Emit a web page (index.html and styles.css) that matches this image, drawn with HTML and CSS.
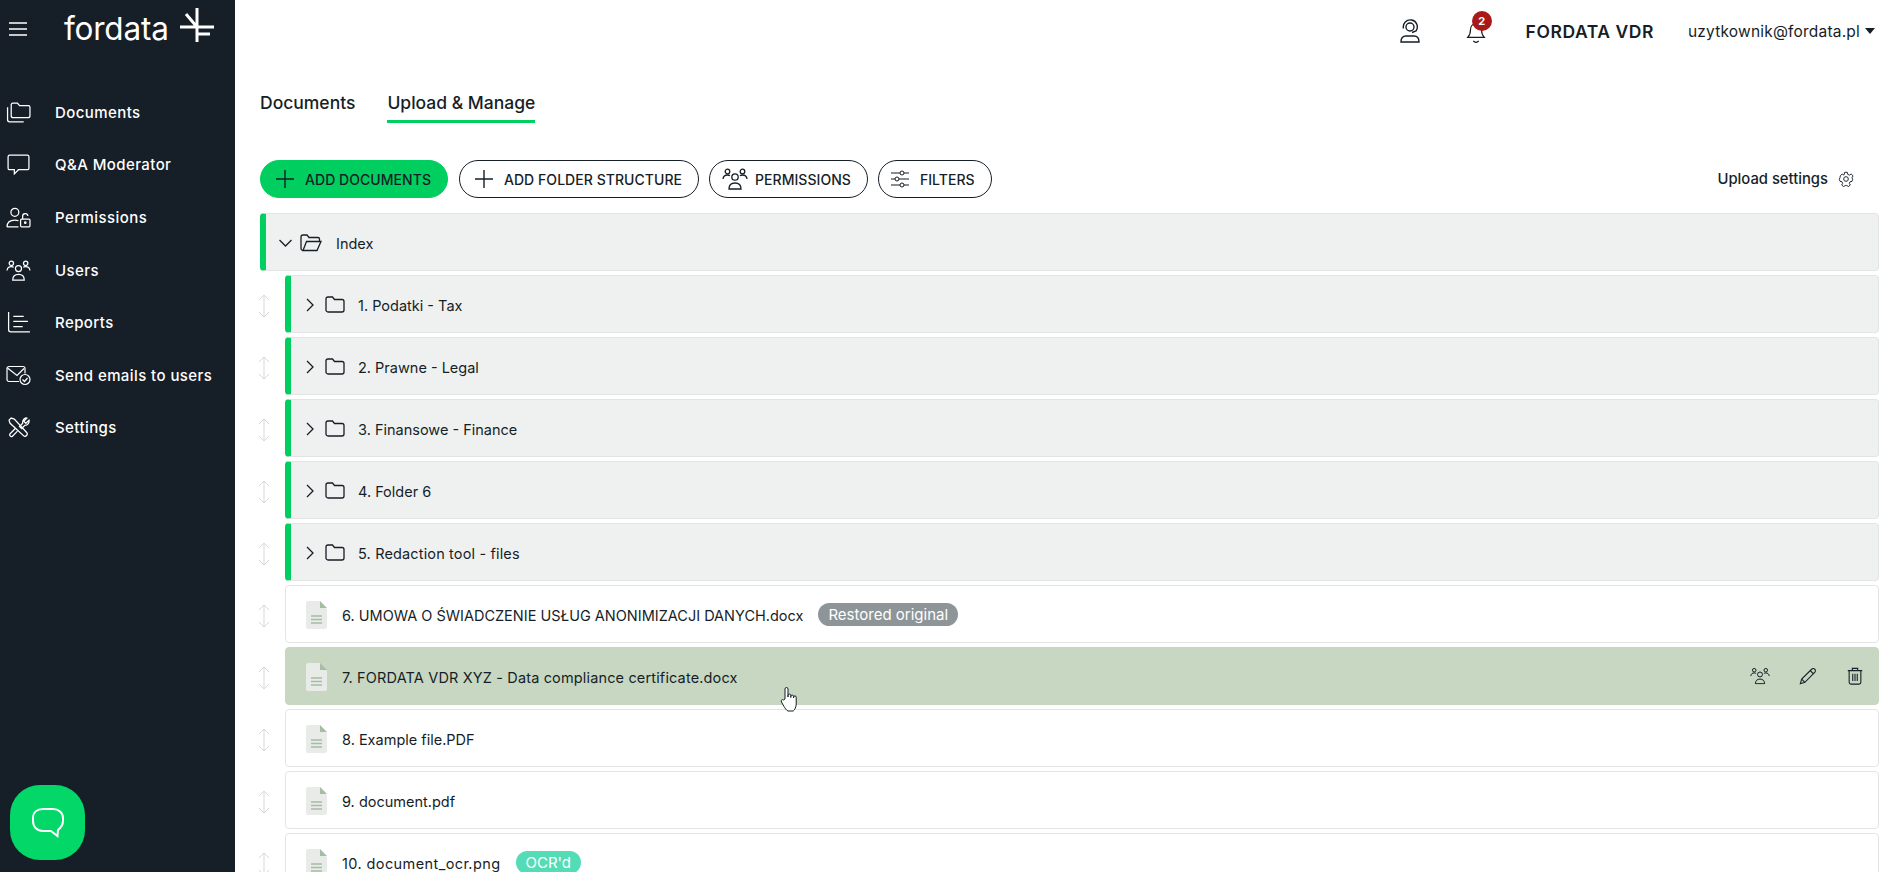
FILE: index.html
```html
<!DOCTYPE html>
<html lang="en">
<head>
<meta charset="utf-8">
<title>Fordata VDR</title>
<link rel="stylesheet" href="styles.css">
</head>
<body>
<svg class="sprite" xmlns="http://www.w3.org/2000/svg">
  <symbol id="i-users" viewBox="0 0 26 22"><g fill="none" stroke="currentColor" stroke-width="1.3"><circle cx="13" cy="9" r="3.2"/><path d="M7 21c0-4 2.500-6 6-6s6 2 6 6z"/><circle cx="5.500" cy="3.500" r="2.300"/><circle cx="20.500" cy="3.500" r="2.300"/><path d="M1 11c.3-2.500 2-4 4.500-4 1 0 1.800.2 2.500.7M25 11c-.3-2.500-2-4-4.500-4-1 0-1.800.2-2.500.7"/></g></symbol>
  <symbol id="i-plus" viewBox="0 0 18 18"><path d="M9 0v18M0 9h18" stroke="currentColor" stroke-width="1.400" fill="none"/></symbol>
  <symbol id="i-folder" viewBox="0 0 20 17"><path d="M1 3a2 2 0 0 1 2-2h4.500l2 2.500H17a2 2 0 0 1 2 2V14a2 2 0 0 1-2 2H3a2 2 0 0 1-2-2z" fill="none" stroke="currentColor" stroke-width="1.300"/></symbol>
  <symbol id="i-chev" viewBox="0 0 10 14"><path d="M2 1l6 6-6 6" fill="none" stroke="currentColor" stroke-width="1.300"/></symbol>
  <symbol id="i-drag" viewBox="0 0 12 24"><path d="M6 1v22M1 6l5-5 5 5M1 18l5 5 5-5" fill="none" stroke="#d5d9d9" stroke-width="1"/></symbol>
  <symbol id="i-file" viewBox="0 0 21 28"><path d="M2 0h11.500L21 8v18a2 2 0 0 1-2 2H2a2 2 0 0 1-2-2V2a2 2 0 0 1 2-2z" fill="#e8ebe8"/><path d="M14 0l7 7h-7z" fill="#a5bca5"/><path d="M5 15h11M5 18.500h11M5 22h11" stroke="#a5bca5" stroke-width="1.500"/></symbol>
</svg>

<div class="app">
  <aside class="sidebar">
    <div class="brand">
      <svg class="burger" viewBox="0 0 18 14"><path d="M0 1h18M0 7h18M0 13h18" stroke="#fff" stroke-width="1.500"/></svg>
      <span class="logo-text">fordata</span>
      <svg class="logo-mark" viewBox="0 0 34 34"><path d="M17 0v34M0 19h34M17 26h13M6 6l11 13" stroke="#fff" stroke-width="3" fill="none"/></svg>
    </div>
    <nav class="nav">
      <a class="nav-item"><svg class="nav-icon" viewBox="0 0 24 20"><path d="M5 3h0a0 0 0 0 0 0 0v10a2 2 0 0 0 2 2h14a2 2 0 0 0 2-2V5a1.500 1.500 0 0 0-1.500-1.500H13L11 1H6.500A1.500 1.500 0 0 0 5 2.500z M1.500 5v12a2 2 0 0 0 2 2H17" fill="none" stroke="#fff" stroke-width="1.200"/></svg>Documents</a>
      <a class="nav-item"><svg class="nav-icon" viewBox="0 0 24 20"><path d="M3.500 1h17A1.500 1.500 0 0 1 22 2.500v11a1.500 1.500 0 0 1-1.500 1.500H12l-4 4v-4H3.500A1.500 1.500 0 0 1 2 13.500v-11A1.500 1.500 0 0 1 3.500 1z" fill="none" stroke="#fff" stroke-width="1.200"/></svg>Q&amp;A Moderator</a>
      <a class="nav-item"><svg class="nav-icon" viewBox="0 0 24 20"><g fill="none" stroke="#fff" stroke-width="1.200"><circle cx="8.500" cy="5" r="3.800"/><path d="M1 19c0-4 2.500-6.500 7.500-6.500 1.500 0 2.500.2 3.500.6M1 19h11"/><rect x="14" y="11.500" width="9" height="7.500" rx="1"/><path d="M16 11.500V9a2.500 2.500 0 0 1 5-.5"/><circle cx="18.500" cy="15" r=".7"/></g></svg>Permissions</a>
      <a class="nav-item"><svg class="nav-icon" viewBox="0 0 26 22"><use href="#i-users"/></svg>Users</a>
      <a class="nav-item"><svg class="nav-icon" viewBox="0 0 24 20"><path d="M2.500 0v17a2 2 0 0 0 2 2H23M7 4h10M7 9h14M7 14h9" fill="none" stroke="#fff" stroke-width="1.200"/></svg>Reports</a>
      <a class="nav-item"><svg class="nav-icon" viewBox="0 0 25 20"><g fill="none" stroke="#fff" stroke-width="1.200"><path d="M13 16H3a2 2 0 0 1-2-2V3a2 2 0 0 1 2-2h14a2 2 0 0 1 2 2v5"/><path d="M1.500 2.500L11 10l7-7"/><circle cx="19" cy="14" r="5"/><path d="M16.500 14l2 2 3-3.500"/></g></svg>Send emails to users</a>
      <a class="nav-item"><svg class="nav-icon" viewBox="0 0 22 20"><g fill="none" stroke="#fff" stroke-width="1.200"><path d="M2 3l2-2 3 1 12 13c1.500 1.500-1.500 4.500-3 3L3 6z"/><path d="M19 1l-3 3 2 2 3-3c.5 2-1 5-4 5l-3 3-2-2 3-3c-.5-3 2-6 4-5zM8 11l-5 5c-1 1 .5 3.500 2 2.500l5-5"/></g></svg>Settings</a>
    </nav>
    <div class="chat-btn">
      <svg viewBox="0 0 32 30"><path d="M11 1h10c5.500 0 10 3.500 10 9v3c0 3-1 5-3 7l-2 2-.5 6-6.500-5H11C5 23 1 19 1 13v-3c0-5.500 4-9 10-9z" fill="none" stroke="#fff" stroke-width="2"/></svg>
    </div>
  </aside>

  <main class="main">
    <header class="topbar">
      <svg class="top-icon" viewBox="0 0 22 24"><g fill="none" stroke="#161e27" stroke-width="1.400"><circle cx="11" cy="8" r="4"/><path d="M4.500 9.500A7 7 0 1 1 17 12l-4 1.500"/><path d="M2 23c0-4 2-6 5-6h8c3 0 5 2 5 6z"/></g></svg>
      <div class="bell">
        <svg class="top-icon" viewBox="0 0 22 26"><g fill="none" stroke="#161e27" stroke-width="1.300"><path d="M2 20c2-2 3-4 3-8s2.500-7 6-7 6 3 6 7 1 6 3 8z"/><path d="M8 24l3 1.500 3-1.500"/></g></svg>
        <span class="badge-count">2</span>
      </div>
      <strong class="org">FORDATA VDR</strong>
      <span class="email">uzytkownik@fordata.pl</span>
      <span class="caret"></span>
    </header>

    <div class="tabs">
      <a class="tab">Documents</a>
      <a class="tab tab-active">Upload &amp; Manage</a>
    </div>

    <div class="toolbar">
      <button class="btn btn-primary"><svg class="btn-icon" viewBox="0 0 18 18"><use href="#i-plus"/></svg>ADD DOCUMENTS</button>
      <button class="btn"><svg class="btn-icon" viewBox="0 0 18 18"><use href="#i-plus"/></svg>ADD FOLDER STRUCTURE</button>
      <button class="btn btn-tight"><svg class="btn-icon-wide" viewBox="0 0 26 22"><use href="#i-users"/></svg>PERMISSIONS</button>
      <button class="btn btn-tight"><svg class="btn-icon" viewBox="0 0 18 18"><path d="M0 3h18M0 9h18M0 15h18" stroke="#161e27" stroke-width="1.100"/><circle cx="11" cy="3" r="2" fill="#fff" stroke="#161e27"/><circle cx="6" cy="9" r="2" fill="#fff" stroke="#161e27"/><circle cx="11" cy="15" r="2" fill="#fff" stroke="#161e27"/></svg>FILTERS</button>
      <div class="upload-settings">Upload settings
        <svg class="gear" viewBox="0 0 24 24"><g fill="none" stroke="#161e27" stroke-width="1.400"><circle cx="12" cy="12" r="3.500"/><path d="M10 2h4l.6 3 2.600 1.100 2.600-1.600 2.800 2.800-1.600 2.600L22 12.500l-1 3-2.900.6-1.100 2.400 1.500 2.600-2.800 2.200-2.500-1.500-2.400 0-2.500 1.500-2.800-2.200 1.500-2.600-1.100-2.400-2.900-.6-1-3 1-2.600L3.400 7.300l2.800-2.800 2.600 1.600L9.400 5z"/></g></svg>
      </div>
    </div>

    <div class="tree">
      <div class="row row-folder row-root">
        <svg class="chev chev-open" viewBox="0 0 10 14"><use href="#i-chev"/></svg>
        <svg class="folder" viewBox="0 0 22 18"><path d="M3 16.500a2 2 0 0 1-2-2V3a2 2 0 0 1 2-2h4l2 2.500h9a1.500 1.500 0 0 1 1.500 1.500v2M3 16.500h14l4-9H6.500z" fill="none" stroke="#161e27" stroke-width="1.300"/></svg>
        <span class="name name-root">Index</span>
      </div>

      <div class="line"><svg class="drag" viewBox="0 0 12 24"><use href="#i-drag"/></svg>
        <div class="row row-folder"><svg class="chev" viewBox="0 0 10 14"><use href="#i-chev"/></svg><svg class="folder" viewBox="0 0 20 17"><use href="#i-folder"/></svg><span class="name">1. Podatki - Tax</span></div></div>
      <div class="line"><svg class="drag" viewBox="0 0 12 24"><use href="#i-drag"/></svg>
        <div class="row row-folder"><svg class="chev" viewBox="0 0 10 14"><use href="#i-chev"/></svg><svg class="folder" viewBox="0 0 20 17"><use href="#i-folder"/></svg><span class="name">2. Prawne - Legal</span></div></div>
      <div class="line"><svg class="drag" viewBox="0 0 12 24"><use href="#i-drag"/></svg>
        <div class="row row-folder"><svg class="chev" viewBox="0 0 10 14"><use href="#i-chev"/></svg><svg class="folder" viewBox="0 0 20 17"><use href="#i-folder"/></svg><span class="name">3. Finansowe - Finance</span></div></div>
      <div class="line"><svg class="drag" viewBox="0 0 12 24"><use href="#i-drag"/></svg>
        <div class="row row-folder"><svg class="chev" viewBox="0 0 10 14"><use href="#i-chev"/></svg><svg class="folder" viewBox="0 0 20 17"><use href="#i-folder"/></svg><span class="name">4. Folder 6</span></div></div>
      <div class="line"><svg class="drag" viewBox="0 0 12 24"><use href="#i-drag"/></svg>
        <div class="row row-folder"><svg class="chev" viewBox="0 0 10 14"><use href="#i-chev"/></svg><svg class="folder" viewBox="0 0 20 17"><use href="#i-folder"/></svg><span class="name name-loose">5. Redaction tool - files</span></div></div>

      <div class="line"><svg class="drag" viewBox="0 0 12 24"><use href="#i-drag"/></svg>
        <div class="row row-file"><svg class="file" viewBox="0 0 21 28"><use href="#i-file"/></svg><span class="name">6. UMOWA O ŚWIADCZENIE USŁUG ANONIMIZACJI DANYCH.docx</span><span class="pill pill-grey">Restored original</span></div></div>
      <div class="line"><svg class="drag" viewBox="0 0 12 24"><use href="#i-drag"/></svg>
        <div class="row row-file row-hover"><svg class="file" viewBox="0 0 21 28"><use href="#i-file"/></svg><span class="name name-loose">7. FORDATA VDR XYZ - Data compliance certificate.docx</span>
          <div class="actions">
            <svg class="act act-users" viewBox="0 0 26 22"><use href="#i-users"/></svg>
            <svg class="act" viewBox="0 0 20 20"><path d="M1.500 18.500l1.500-5L14 2.500c1-1 2.500-1 3.500 0s1 2.500 0 3.500L6.500 17zM3 13.500l3.500 3.500M12.500 4l3.500 3.500" fill="none" stroke="#161e27" stroke-width="1.200"/></svg>
            <svg class="act" viewBox="0 0 20 20"><path d="M2 4h16M7 4V1.500h6V4M3.500 4v13a2 2 0 0 0 2 2h9a2 2 0 0 0 2-2V4M7.500 7.500v8M10 7.500v8M12.500 7.500v8" fill="none" stroke="#161e27" stroke-width="1.200"/></svg>
          </div>
        </div></div>
      <div class="line"><svg class="drag" viewBox="0 0 12 24"><use href="#i-drag"/></svg>
        <div class="row row-file"><svg class="file" viewBox="0 0 21 28"><use href="#i-file"/></svg><span class="name">8. Example file.PDF</span></div></div>
      <div class="line"><svg class="drag" viewBox="0 0 12 24"><use href="#i-drag"/></svg>
        <div class="row row-file"><svg class="file" viewBox="0 0 21 28"><use href="#i-file"/></svg><span class="name">9. document.pdf</span></div></div>
      <div class="line"><svg class="drag" viewBox="0 0 12 24"><use href="#i-drag"/></svg>
        <div class="row row-file"><svg class="file" viewBox="0 0 21 28"><use href="#i-file"/></svg><span class="name name-wide">10. document_ocr.png</span><span class="pill pill-teal">OCR'd</span></div></div>
    </div>
  </main>
</div>

<svg class="cursor" viewBox="0 0 18 26"><path d="M5 13V3a1.500 1.500 0 0 1 3 0v8V9.500a1.400 1.400 0 0 1 2.800 0v2-1a1.400 1.400 0 0 1 2.800 0v1.500-.8a1.300 1.300 0 0 1 2.600 0V18c0 3-1.500 6-3 7H8c-2-1-3-3-4-4.500L1.500 16c-1-2 1-3 2-2z" fill="#fff" stroke="#161e27" stroke-width="1"/></svg>
</body>
</html>
```

FILE: styles.css
```css
* { box-sizing: border-box; }
html, body { margin: 0; height: 100%; overflow: hidden; background: #fff; }
body { font-family: Inter, "Liberation Sans", sans-serif; color: #161e27; font-size: 14px; }
.sprite { position: absolute; width: 0; height: 0; }

.app { display: flex; height: 872px; overflow: hidden; }

.sidebar { width: 235px; flex: none; background: #161e27; color: #fff; display: flex; flex-direction: column; }
.brand { height: 56px; display: flex; align-items: center; padding-left: 9px; }
.burger { width: 18px; height: 14px; margin-right: 37px; margin-top: 2px; flex: none; }
.logo-text { font-size: 31.500px; font-weight: 400; color: #fff; margin-top: 1px; letter-spacing: -.2px; }
.logo-mark { width: 34px; height: 34px; margin-left: 11px; margin-top: -6px; flex: none; }
.nav { display: flex; flex-direction: column; margin-top: 30px; }
.nav-item { height: 52.600px; display: flex; align-items: center; font-size: 15px; font-weight: 500; color: #fff; letter-spacing: .42px; }
.nav-icon { width: 25px; height: 21px; margin: 0 24px 0 6px; flex: none; color: #fff; }
.chat-btn { position: absolute; left: 10px; top: 785px; width: 75px; height: 75px; border-radius: 30px; background: #02d767; display: flex; align-items: center; justify-content: center; }
.chat-btn svg { width: 32px; height: 30px; }

.main { flex: 1; min-width: 0; padding: 0 16px 0 25px; }

.topbar { height: 62px; display: flex; align-items: center; justify-content: flex-end; }
.top-icon { width: 22px; height: 24px; display: block; }
.bell { position: relative; margin-left: 44px; }
.badge-count { position: absolute; left: 7px; top: -8px; width: 20px; height: 20px; border-radius: 50%; background: #a81919; color: #fff; font-size: 11px; font-weight: 700; display: flex; align-items: center; justify-content: center; }
.org { font-size: 17.500px; font-weight: 600; margin-left: 39px; letter-spacing: .55px; }
.email { font-size: 15.500px; letter-spacing: .2px; margin-left: 34px; }
.caret { width: 0; height: 0; border: 5px solid transparent; border-top: 6px solid #161e27; border-bottom: 0; margin: 0 4px 0 5px; }

.tabs { display: flex; gap: 32px; height: 61px; align-items: flex-start; }
.tab { font-size: 17.500px; font-weight: 500; padding: 30px 0 6px; line-height: 22px; border-bottom: 3px solid transparent; }
.tab-active { border-bottom-color: #00cf60; }

.toolbar { display: flex; align-items: center; gap: 10px; height: 38px; margin-top: 37px; margin-bottom: 15px; }
.btn { height: 38px; border: 1px solid #161e27; border-radius: 19px; background: #fff; color: #161e27; font: 500 14px Inter, "Liberation Sans", sans-serif; letter-spacing: .05px; display: flex; align-items: center; padding: 0 16px 0 15px; white-space: nowrap; }
.btn-primary { background: #00cf60; border-color: #00cf60; margin-right: 1px; }
.btn-tight { padding: 0 16px 0 12px; }
.btn-icon { width: 18px; height: 18px; margin-right: 11px; flex: none; }
.btn-icon-wide { width: 26px; height: 22px; margin-right: 7px; flex: none; }
.upload-settings { margin-left: auto; margin-right: 25px; display: flex; align-items: center; gap: 10px; font-size: 14.800px; font-weight: 500; }
.gear { width: 16px; height: 16px; }

.tree { display: flex; flex-direction: column; gap: 4px; }
.line { display: flex; align-items: center; flex: none; }
.drag { width: 12px; height: 24px; margin: 3px 15px 0 -2px; flex: none; }
.row { flex: 1; height: 58px; display: flex; align-items: center; border-radius: 4px; border: 1px solid #e3e5e5; }
.row-folder { background: #eff1f1; border-left: 6px solid #00cf60; padding-left: 14px; }
.row-root { flex: none; padding-left: 14px; }
.row-file { background: #fff; padding-left: 20px; }
.row-hover { background: #c7d7c2; border-color: #c7d7c2; }
.chev { width: 10px; height: 14px; flex: none; margin-top: 1px; }
.chev-open { transform: rotate(90deg); width: 11px; margin-right: 6px; }
.folder { width: 20px; height: 17px; margin: 1px 0 0 10px; flex: none; }
.row-root .folder { width: 22px; height: 18px; margin-left: 3px; }
.name { margin-left: 13px; margin-top: 2px; font-size: 14.500px; font-weight: 400; white-space: nowrap; }
.name-root { margin-left: 14px; }
.name-loose { letter-spacing: .15px; }
.name-wide { letter-spacing: .4px; }
.file { width: 21px; height: 28px; flex: none; margin-top: 2px; }
.row-file .name { margin-left: 15px; }
.pill { margin-left: 15px; height: 23px; border-radius: 12px; color: #fff; font-size: 15px; display: flex; align-items: center; padding: 0 10px; }
.pill-grey { background: #8d9598; }
.pill-teal { background: #53dcb6; }
.actions { margin-left: auto; display: flex; align-items: center; gap: 29px; padding-right: 14px; }
.act { width: 18px; height: 18px; }
.act-users { width: 20px; height: 18px; }

.cursor { position: absolute; left: 780px; top: 686px; width: 18px; height: 26px; }
```
